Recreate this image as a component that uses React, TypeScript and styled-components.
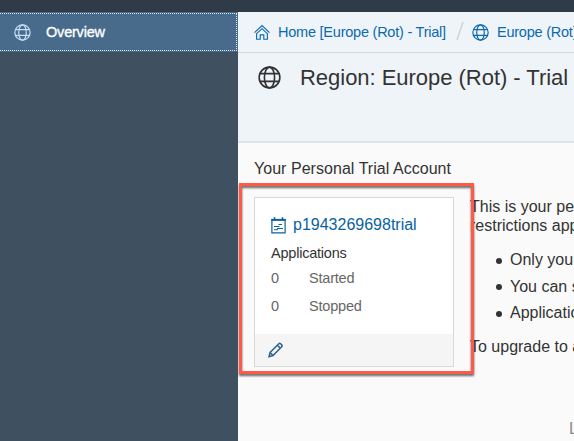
import React from "react";
import styled, { createGlobalStyle } from "styled-components";

const GlobalStyle = createGlobalStyle`
  * { box-sizing: border-box; }
  html, body { margin: 0; overflow: hidden; }
  body { font-family: "Liberation Sans", Arial, sans-serif; font-size: 16px; color: #333; }
`;

const Page = styled.div`
  width: 574px;
  height: 441px;
  display: flex;
  flex-direction: column;
  overflow: hidden;
  background: #fafafa;
`;

const TopBar = styled.div`
  height: 12px;
  flex: none;
  background: #2f3c48;
`;

const Body = styled.div`
  display: flex;
  flex: 1;
  min-height: 0;
`;

const Sidebar = styled.nav`
  width: 238px;
  flex: none;
  background: #3f5161;
`;

const NavItem = styled.a`
  display: flex;
  align-items: center;
  height: 40px;
  background: #486a8b;
  outline: 1px dotted #d8e6f2;
  outline-offset: -2px;
  margin-left: -2px;
  padding-left: 16px;
  color: #fff;
  font-size: 14.5px;
  letter-spacing: -0.2px;
  gap: 15px;
  -webkit-text-stroke: 0.35px #fff;
`;

const Main = styled.main`
  flex: 1;
  min-width: 0;
  overflow: hidden;
`;

const Crumbs = styled.div`
  height: 41px;
  display: flex;
  align-items: center;
  padding-left: 16px;
  background: #eff4f9;
  border-bottom: 1px solid #d6d9dc;
  color: #0a6ab0;
  white-space: nowrap;
`;

const CrumbLink = styled.a<{ $width?: number }>`
  margin-left: 8px;
  width: ${(p) => (p.$width ? `${p.$width}px` : "auto")};
  flex: none;
  font-size: 14.5px;
  letter-spacing: -0.23px;
  line-height: 20px;
`;

const TitleArea = styled.header`
  height: 90px;
  display: flex;
  align-items: flex-start;
  gap: 19px;
  padding: 12px 0 0 20px;
  background: #eff4f9;
  border-bottom: 2px solid #dfe4e7;
  white-space: nowrap;
  svg { margin-top: 1px; }
`;

const Title = styled.h1`
  margin: 0;
  font-size: 22px;
  letter-spacing: -0.03px;
  font-weight: 400;
  line-height: 26px;
`;

const Content = styled.section`
  padding: 16px 0 0 16px;
`;

const SectionTitle = styled.h2`
  margin: 0;
  font-size: 16px;
  letter-spacing: 0.04px;
  font-weight: 400;
  line-height: 20px;
`;

const Columns = styled.div`
  position: relative;
  display: flex;
  align-items: flex-start;
  padding-top: 18px;
`;

const Highlight = styled.div`
  position: absolute;
  left: -15px;
  top: 4px;
  width: 235px;
  height: 191px;
  border: 3px solid #ff5948;
  filter: drop-shadow(0 2px 0.8px rgba(0, 0, 0, 0.6));
`;

const Card = styled.article`
  width: 200px;
  height: 170px;
  flex: none;
  display: flex;
  flex-direction: column;
  background: #fff;
  border: 1px solid #d9d9d9;
`;

const CardBody = styled.div`
  flex: 1;
  padding: 17px 0 0 16px;
`;

const AccountLink = styled.a`
  display: flex;
  align-items: center;
  gap: 7px;
  height: 20px;
  color: #0a62a0;
  font-size: 16px;
  line-height: 20px;
`;

const AppsLabel = styled.div`
  margin-top: 8px;
  font-size: 14.5px;
  letter-spacing: -0.22px;
  line-height: 20px;
`;

const Stat = styled.div`
  display: grid;
  grid-template-columns: 38px 1fr;
  height: 28px;
  color: #666;
  font-size: 14.5px;
  letter-spacing: -0.2px;
  line-height: 30px;
`;

const CardFooter = styled.div`
  height: 32px;
  display: flex;
  align-items: center;
  padding-left: 13px;
  background: #f5f5f5;
`;

const Notes = styled.div`
  width: 420px;
  flex: none;
  margin-left: 16px;
  font-size: 16px;
  white-space: nowrap;
`;

const Paragraph = styled.p`
  margin: 0;
  line-height: 19px;
`;

const Rules = styled.ul`
  list-style: none;
  margin: 12px 0 10.5px;
  padding: 0 0 0 26px;
`;

const Rule = styled.li`
  display: flex;
  align-items: center;
  gap: 8px;
  height: 26.5px;
  line-height: 26px;
  &::before {
    content: "";
    width: 6px;
    height: 6px;
    border-radius: 50%;
    background: #333;
    margin-top: 1px;
  }
`;

const Legal = styled.footer`
  margin: 51.5px 0 0 315px;
  color: #8a8a8a;
  font-size: 16px;
  line-height: 20px;
  white-space: nowrap;
`;

const Glyph = styled.svg`
  flex: none;
  display: block;
  fill: none;
  stroke: currentColor;
`;

const Divider = styled(Glyph)`
  margin: 0 8px 2px 9px;
  color: #cfd4d8;
`;

const LightGlyph = styled.span`
  color: #c3e0fb;
`;

function Globe({ size, weight }: { size: number; weight: number }) {
  return (
    <Glyph width={size} height={size} viewBox="0 0 24 24" strokeWidth={weight}>
      <circle cx="12" cy="12" r="10.8" />
      <ellipse cx="12" cy="12" rx="5.3" ry="10.8" />
      <path d="M2 8h20M2 16h20" />
    </Glyph>
  );
}

function Home() {
  return (
    <Glyph width="16" height="16" viewBox="0 0 16 16" strokeWidth="1.15">
      <path d="M.5 8.6 8 1.5l7.5 7.1M2.1 10.2 8 4.7l5.9 5.5M2.6 9.9v5.3h3.6v-4.4h3.6v4.4h3.6V9.9" />
    </Glyph>
  );
}

function Calendar() {
  return (
    <Glyph width="15" height="17" viewBox="0 0 15 17" strokeWidth="1.2">
      <path d="M.9 2.5h13.2v13.4H.9z" />
      <path d="M.3 2.9h14.4" strokeWidth="2" />
      <path d="M3.5.3v2M11.5.3v2" strokeWidth="1.6" />
      <path d="M7.5 7.5H11M3 9.5h5.5M6 11.5h6M3 12.7h4" strokeWidth="1" />
    </Glyph>
  );
}

function Pencil() {
  return (
    <Glyph width="15" height="16" viewBox="0 0 15 16" strokeWidth="1.5" color="#30628f">
      <path d="m1 14.6 1.1-4.1 8.7-8.7q.9-.9 1.8 0l1.1 1.1q.9.9 0 1.8L5 13.5zM2.1 10.5 5 13.5M9.4 3.2l2.9 2.9" />
    </Glyph>
  );
}

export default function App() {
  return (
    <Page>
      <GlobalStyle />
      <TopBar />
      <Body>
        <Sidebar>
          <NavItem>
            <LightGlyph><Globe size={17} weight={1.7} /></LightGlyph>
            Overview
          </NavItem>
        </Sidebar>
        <Main>
          <Crumbs>
            <Home />
            <CrumbLink $width={169}>Home [Europe (Rot) - Trial]</CrumbLink>
            <Divider width="8" height="20" viewBox="0 0 8 20" strokeWidth="1.6">
              <path d="M7 1 1 19" />
            </Divider>
            <Globe size={17} weight={1.7} />
            <CrumbLink>Europe (Rot) - Trial</CrumbLink>
          </Crumbs>
          <TitleArea>
            <Globe size={23} weight={1.7} />
            <Title>Region: Europe (Rot) - Trial</Title>
          </TitleArea>
          <Content>
            <SectionTitle>Your Personal Trial Account</SectionTitle>
            <Columns>
              <Card>
                <CardBody>
                  <AccountLink><Calendar />p1943269698trial</AccountLink>
                  <AppsLabel>Applications</AppsLabel>
                  <Stat><span>0</span><span>Started</span></Stat>
                  <Stat><span>0</span><span>Stopped</span></Stat>
                </CardBody>
                <CardFooter><Pencil /></CardFooter>
              </Card>
              <Notes>
                <Paragraph>This is your pe<br />restrictions app</Paragraph>
                <Rules>
                  <Rule>Only you</Rule>
                  <Rule>You can s</Rule>
                  <Rule>Applicatio</Rule>
                </Rules>
                <Paragraph>To upgrade to a</Paragraph>
              </Notes>
              <Highlight />
            </Columns>
            <Legal>L</Legal>
          </Content>
        </Main>
      </Body>
    </Page>
  );
}
